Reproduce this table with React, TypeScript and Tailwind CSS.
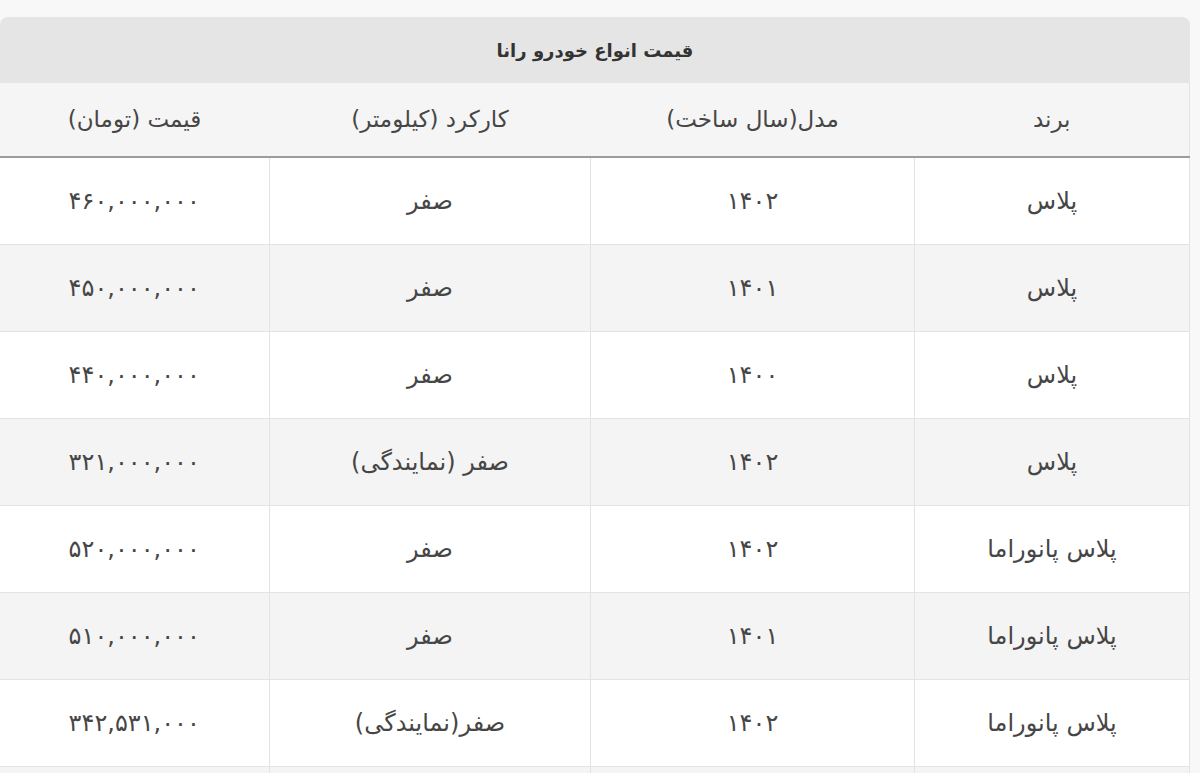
const rows = [
  ['پلاس', '۱۴۰۲', 'صفر', '۴۶۰,۰۰۰,۰۰۰'],
  ['پلاس', '۱۴۰۱', 'صفر', '۴۵۰,۰۰۰,۰۰۰'],
  ['پلاس', '۱۴۰۰', 'صفر', '۴۴۰,۰۰۰,۰۰۰'],
  ['پلاس', '۱۴۰۲', 'صفر (نمایندگی)', '۳۲۱,۰۰۰,۰۰۰'],
  ['پلاس پانوراما', '۱۴۰۲', 'صفر', '۵۲۰,۰۰۰,۰۰۰'],
  ['پلاس پانوراما', '۱۴۰۱', 'صفر', '۵۱۰,۰۰۰,۰۰۰'],
  ['پلاس پانوراما', '۱۴۰۲', 'صفر(نمایندگی)', '۳۴۲,۵۳۱,۰۰۰'],
  // ردیف بعدی فقط لبه‌اش در تصویر دیده می‌شود
  ['', '', '', ''],
]

const headers = ['برند', 'مدل(سال ساخت)', 'کارکرد (کیلومتر)', 'قیمت (تومان)']
const widths = ['w-[275px]', 'w-[324px]', 'w-[321px]', 'w-[270px]']

export default function App() {
  return (
    <div className="h-[773px] overflow-hidden bg-[#f8f8f8] pt-[17px] pr-[10px] font-['DejaVu_Sans',sans-serif]">
      <div dir="rtl" className="w-[1190px]">
        {/* عنوان جدول */}
        <div className="h-[66px] flex items-center justify-center rounded-t-[8px] bg-[#e5e5e5] text-[18px] font-bold text-[#333]">
          قیمت انواع خودرو رانا
        </div>

        <table className="table-fixed border-collapse w-full text-[#464646]">
          <thead>
            <tr className="h-[74px] bg-[#f5f5f5] border-b-2 border-[#9c9c9c]">
              {headers.map((h, i) => (
                <th key={i} className={`${widths[i]} font-normal text-[23px] text-center ${i === 0 ? 'border-r border-[#e3e3e3]' : ''}`}>
                  {h}
                </th>
              ))}
            </tr>
          </thead>
          <tbody>
            {rows.map((r, ri) => (
              <tr key={ri} className={`h-[87px] ${ri % 2 === 1 ? 'bg-[#f4f4f4]' : 'bg-white'}`}>
                {r.map((c, ci) => (
                  <td
                    key={ci}
                    className={`text-center text-[24px] leading-none border border-[#e3e3e3] ${ci === 3 ? 'border-l-0 text-[22px] tracking-[1px]' : ''}`}
                  >
                    {c}
                  </td>
                ))}
              </tr>
            ))}
          </tbody>
        </table>
      </div>
    </div>
  )
}
